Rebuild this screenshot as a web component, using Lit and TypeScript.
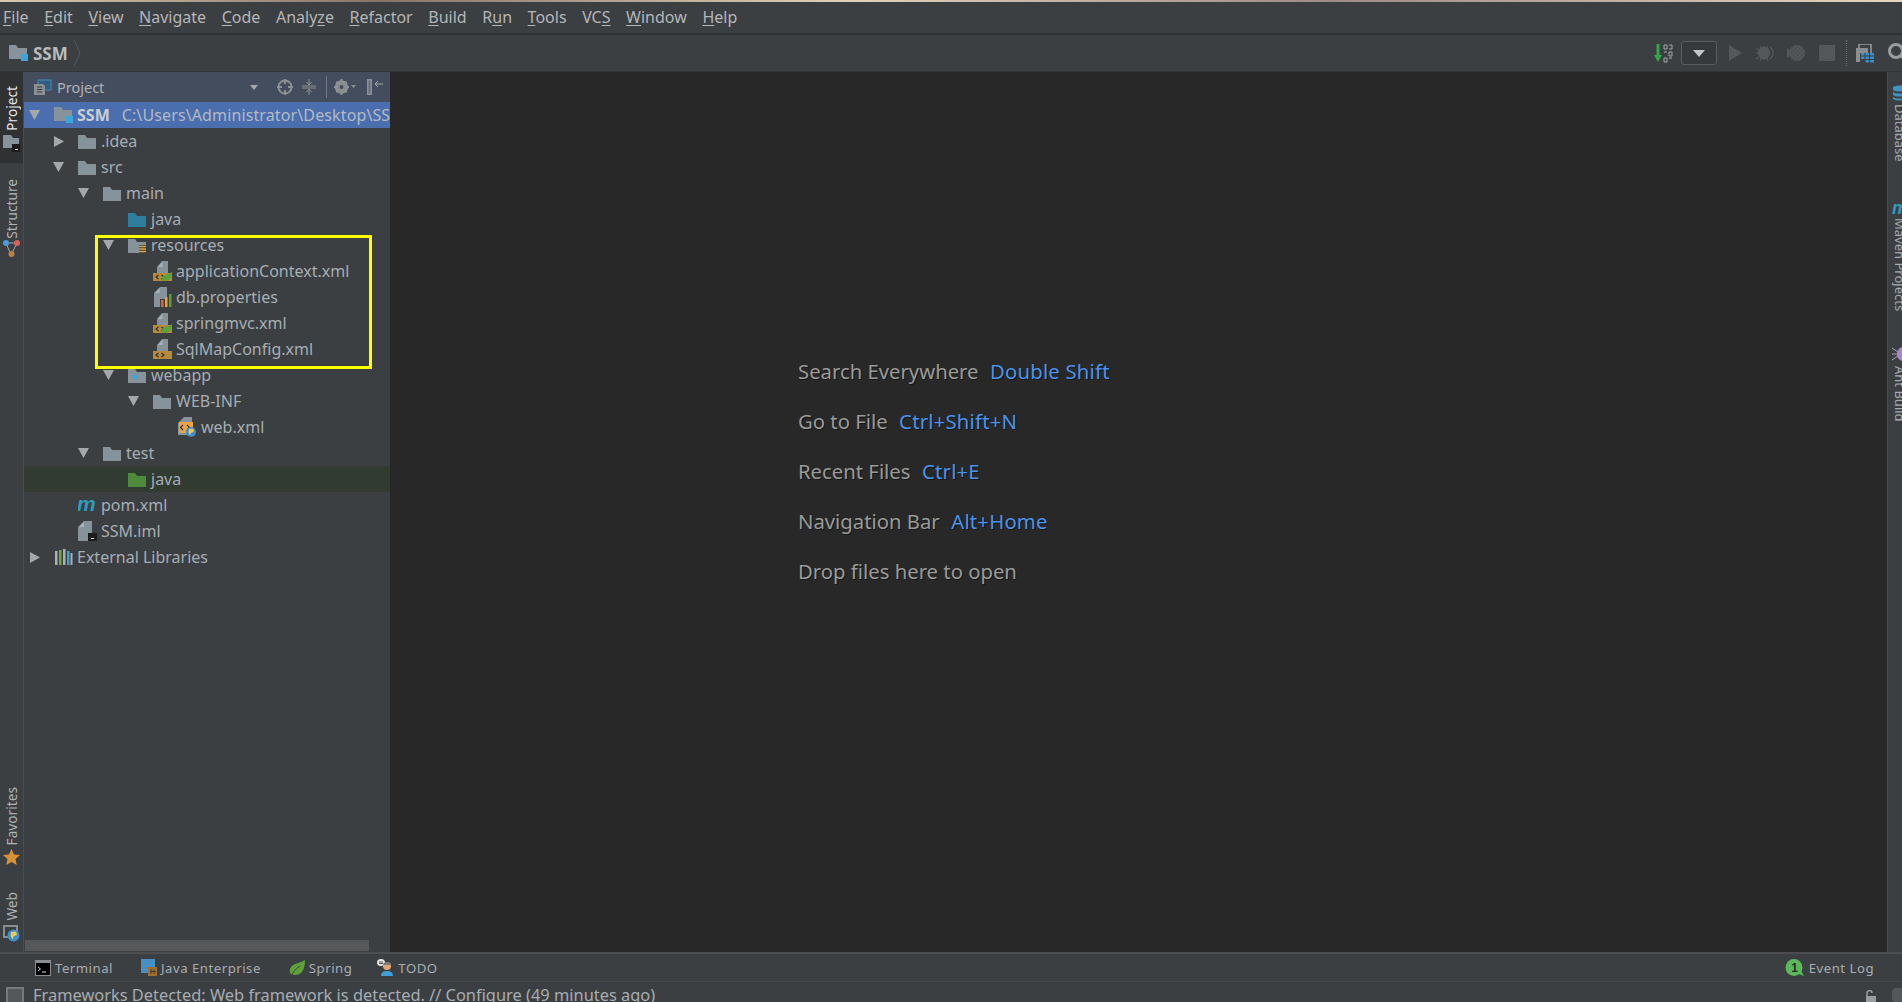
import { LitElement, html, svg, css } from "lit";
import { customElement } from "lit/decorators.js";

const folder = (fill = "#87939a", extra: unknown = "") => html`<svg class="ico" width="18" height="15" viewBox="0 0 18 15"><path d="M0 1h7l2 3h9v11H0z" fill=${fill}/>${extra}</svg>`;
const module_ = html`<svg class="ico" width="19" height="18" viewBox="0 0 19 18"><path d="M0 1h7l2 3h9v11H0z" fill="#87939a"/><rect x="12" y="10" width="7" height="7" fill="#3aa7dc"/></svg>`;
const resFolder = folder("#87939a", svg`<rect x="11" y="7" width="7" height="8" fill="#3c3f41"/><path d="M11 8.500h7M11 11h7M11 13.500h7" stroke="#d9a343" stroke-width="1.300"/>`);
const webFolder = folder("#87939a", svg`<circle cx="7" cy="9" r="2.500" fill="#3aa7dc"/>`);
const doc = svg`<path d="M4 12V6l5-6h6v12z" fill="#87939a"/><path d="M9.500 1v5H5z" fill="#a9b2b7"/>`;
const tagBand = svg`<rect x="0" y="12" width="19" height="8" fill="#b68a3e"/><path d="M5.500 14l-2.500 2 2.500 2M8.500 14l2.500 2-2.500 2" stroke="#2b2b2b" stroke-width="1.100" fill="none"/>`;
const xmlPlain = html`<svg class="ico" width="19" height="20" viewBox="0 0 19 20">${doc}${tagBand}</svg>`;
const xmlSpring = html`<svg class="ico" width="19" height="20" viewBox="0 0 19 20">${doc}${tagBand}<path d="M19 11c0 5-2 9-7 9-2.500 0-3.500-1.500-3-3.500C10 13.500 15 14 19 11z" fill="#5ea13a"/></svg>`;
const props = html`<svg class="ico" width="19" height="20" viewBox="0 0 19 20"><path d="M7 0h7v20H1V6z" fill="#87939a"/><path d="M6.500 1v5H2z" fill="#a9b2b7"/><rect x="7" y="12" width="12" height="8" fill="#3c3f41"/><rect x="8" y="13" width="2.500" height="7" fill="#e2662a"/><rect x="12" y="10" width="2.500" height="10" fill="#e9a33a"/><rect x="16" y="7" width="2.500" height="13" fill="#5f9e32"/></svg>`;
const webXml = html`<svg class="ico" width="19" height="20" viewBox="0 0 19 20"><path d="M6 0h8v18H0V6z" fill="#87939a"/><rect x="1" y="5" width="14" height="11" fill="#eca341"/><path d="M5 8l-2.500 2.500L5 13M9 8l2.500 2.500L9 13" stroke="#33291a" stroke-width="1.100" fill="none"/><circle cx="13" cy="15" r="5" fill="#3b8ed0"/><path d="M11 12l4-.500 1 3-3 1.500-1 2.500-1.500-3z" fill="#f1c84c"/></svg>`;
const pomM = html`<svg class="ico" width="19" height="14" viewBox="0 0 19 14"><text x="-1" y="13" font-family="Liberation Sans" font-size="21" font-weight="700" font-style="italic" fill="#2f9bbf">m</text></svg>`;
const iml = html`<svg class="ico" width="19" height="20" viewBox="0 0 19 20"><path d="M6 0h8v20H0V6z" fill="#87939a"/><path d="M6 1v5H1z" fill="#a9b2b7"/><rect x="10" y="12" width="9" height="8" fill="#1c1c1c"/><rect x="13" y="17" width="3" height="1" fill="#ddd"/></svg>`;
const libs = html`<svg class="ico" width="19" height="16" viewBox="0 0 19 16"><rect x="1" y="2" width="2.500" height="14" fill="#a8b0b5"/><rect x="5" y="1" width="2.500" height="15" fill="#6dab3c"/><rect x="9" y="0" width="2.500" height="16" fill="#a8b0b5"/><rect x="13" y="2" width="2.500" height="14" fill="#3f9fd6"/><rect x="16.500" y="4" width="2" height="12" fill="#a8b0b5"/></svg>`;

type Row = { d: number; a?: "o" | "c"; i: unknown; t: unknown; sel?: boolean; hl?: boolean };
const rows: Row[] = [
  { d: 0, a: "o", i: module_, t: html`<b>SSM</b><span class="path">C:\\Users\\Administrator\\Desktop\\SSM</span>`, sel: true },
  { d: 1, a: "c", i: folder(), t: ".idea" },
  { d: 1, a: "o", i: folder(), t: "src" },
  { d: 2, a: "o", i: folder(), t: "main" },
  { d: 3, i: folder("#2e7f9f"), t: "java" },
  { d: 3, a: "o", i: resFolder, t: "resources" },
  { d: 4, i: xmlSpring, t: "applicationContext.xml" },
  { d: 4, i: props, t: "db.properties" },
  { d: 4, i: xmlSpring, t: "springmvc.xml" },
  { d: 4, i: xmlPlain, t: "SqlMapConfig.xml" },
  { d: 3, a: "o", i: webFolder, t: "webapp" },
  { d: 4, a: "o", i: folder(), t: "WEB-INF" },
  { d: 5, i: webXml, t: "web.xml" },
  { d: 2, a: "o", i: folder(), t: "test" },
  { d: 3, i: folder("#4d8a3c"), t: "java", hl: true },
  { d: 1, i: pomM, t: "pom.xml" },
  { d: 1, i: iml, t: "SSM.iml" },
  { d: 0, a: "c", i: libs, t: "External Libraries" },
];

const menus: [string, string, string][] = [
  ["", "F", "ile"], ["", "E", "dit"], ["", "V", "iew"], ["", "N", "avigate"], ["", "C", "ode"],
  ["Analy", "z", "e"], ["", "R", "efactor"], ["", "B", "uild"], ["R", "u", "n"], ["", "T", "ools"],
  ["VC", "S", ""], ["", "W", "indow"], ["", "H", "elp"],
];
const hints: [string, string][] = [
  ["Search Everywhere", "Double Shift"], ["Go to File", "Ctrl+Shift+N"], ["Recent Files", "Ctrl+E"],
  ["Navigation Bar", "Alt+Home"], ["Drop files here to open", ""],
];

@customElement("app-root")
export class AppRoot extends LitElement {
  static styles = css`
    :host { display: flex; flex-direction: column; width: 100vw; height: 100vh; overflow: hidden; background: #3c3f41; color: #b4b8bb; font-family: "Noto Sans", sans-serif; font-size: 16px; }
    .ico { display: block; flex: none; }
    .photo { height: 2px; flex: none; background: linear-gradient(90deg, #d8c8b0, #8a7468 20%, #e2d2bc 45%, #a08a84 70%, #e6d6c0); }
    .menu { flex: none; box-sizing: border-box; padding: 0 0 2px 3px; display: flex; align-items: center; gap: 15.6px; border-bottom: 2px solid #2f3031; color: #b4b6b8; height: 33px; }
    .menu u { text-underline-offset: 2px; }
    .nav { height: 36px; flex: none; display: flex; align-items: center; padding-left: 9px; border-bottom: 1px solid #323436; background: #3c3f41; }
    .nav b { margin-left: 5px; color: #b8bcbf; font-size: 17px; }
    .crumb { margin-left: 5px; }
    .spacer { flex: 1; }
    .run { display: flex; align-items: center; margin-right: -7px; }
    .combo { width: 36px; height: 24px; box-sizing: border-box; border: 1px solid #5a5d5f; border-radius: 3px; margin: 0 12px 0 8px; display: flex; align-items: center; justify-content: center; background: #36393b; }
    .g13 { margin-right: 13px; }
    .g14 { margin-right: 14px; }
    .dots { width: 0; height: 26px; border-left: 1px dotted #6a6d6f; margin: 0 9px 0 11px; }
    .search { margin-left: 13px; }
    .main { flex: 1; min-height: 0; display: flex; }
    .left { width: 23px; flex: none; border-right: 1px solid #4a4c4e; display: flex; flex-direction: column; background: #3c3f41; }
    .tab { display: flex; flex-direction: column; align-items: center; width: 23px; color: #b0b3b5; font-size: 13.7px; }
    .tab span { writing-mode: vertical-rl; transform: rotate(180deg); line-height: 20px; }
    .tab.active { background: #2f3133; color: #e6e6e6; height: 91px; box-sizing: border-box; padding-top: 14px; gap: 4px; }
    .tab.structure { margin-top: 16px; gap: 1px; }
    .tab.fav { margin-top: auto; gap: 4px; }
    .tab.web { margin-top: 27px; margin-bottom: 10px; gap: 4px; }
    .panel { width: 366px; flex: none; display: flex; flex-direction: column; position: relative; background: #3c3f41; overflow: hidden; }
    .phead { height: 30px; flex: none; background: #444d5e; display: flex; align-items: center; padding-left: 10px; font-size: 14.5px; color: #aeb2b6; }
    .phead .label { margin-left: 5px; width: 193px; }
    .phead .acts { display: flex; align-items: center; }
    .phead .bar { width: 1px; height: 22px; background: #70767f; margin-left: 10px; }
    .cross { margin-left: 19px; }
    .coll { margin-left: 9px; }
    .gear { margin-left: 7px; }
    .pin { margin-left: 11px; }
    .tree { flex: 1; min-height: 0; }
    .row { height: 26px; display: flex; align-items: center; white-space: nowrap; color: #a5aeb5; font-size: 16px; }
    .row.sel { background: #4b6eaf; color: #c9ced4; }
    .row.sel b { color: #c9ced4; }
    .row.hl { background: #323b32; }
    .arrow { width: 29px; box-sizing: border-box; padding-right: 8px; flex: none; display: flex; justify-content: center; }
    .rowicon { width: 20px; height: 20px; box-sizing: border-box; padding-left: 1px; flex: none; display: flex; align-items: center; margin-right: 4px; }
    .path { margin-left: 12px; color: #b2bac3; letter-spacing: .12px; }
    .scroll { height: 11px; flex: none; width: 344px; margin: 0 0 1px 1px; background: #565759; }
    .mark { position: absolute; left: 71px; top: 163px; width: 271px; height: 128px; border: 3px solid #ffff00; pointer-events: none; }
    .editor { flex: 1; background: #282828; padding: 286px 0 0 408px; display: flex; flex-direction: column; gap: 23px; font-size: 20.3px; color: #9a9a98; text-shadow: 1px 1px 0 #161616; }
    .hint { line-height: 27px; display: flex; gap: 11.5px; white-space: nowrap; }
    .hint em { font-style: normal; color: #4a93ea; letter-spacing: .2px; }
    .right { width: 14px; flex: none; border-left: 1px solid #4a4c4e; overflow: hidden; position: relative; background: #3c3f41; }
    .rtab { display: flex; flex-direction: column; align-items: flex-start; width: 24px; margin-left: 4px; font-size: 13px; color: #a7abad; gap: 3px; }
    .rtab span { writing-mode: vertical-rl; line-height: 16px; }
    .rtab.db { margin-top: 13px; }
    .rtab.mv { margin-top: 40px; }
    .rtab.ant { margin-top: 34px; }
    .tools { height: 29px; flex: none; box-sizing: border-box; border-top: 2px solid #4b4d4f; display: flex; align-items: center; padding-left: 35px; font-size: 13.2px; letter-spacing: .5px; color: #a6adb3; }
    .tool { display: flex; align-items: center; gap: 4px; margin-right: 28px; white-space: nowrap; }
    .tool.sp { margin-right: 25px; }
    .event { margin: 0 28px 0 auto; }
    .status { height: 21px; flex: none; box-sizing: border-box; border-top: 1px solid #47494b; display: flex; padding-left: 6px; overflow: hidden; font-size: 16.4px; color: #a6adb3; white-space: nowrap; }
    .status .check { width: 18px; height: 17px; box-sizing: border-box; border: 2px solid #77797b; background: #55575a; margin: 5px 9px 0 0; flex: none; }
    .status .msg { line-height: 26px; }
    .status .lock { margin-left: auto; margin-top: 8px; margin-right: 16px; }
    .status .blob { width: 12px; height: 14px; border-radius: 4px; background: #55585a; margin: 6px -2px 0 0; flex: none; }
  `;

  arrow(a?: "o" | "c") {
    if (a === "o") return html`<svg width="11" height="10" viewBox="0 0 11 10"><path d="M0 0h11L5.500 10z" fill="#a4a8aa"/></svg>`;
    if (a === "c") return html`<svg width="10" height="11" viewBox="0 0 10 11"><path d="M0 0v11l10-5.500z" fill="#a4a8aa"/></svg>`;
    return "";
  }

  render() {
    return html`
      <div class="photo"></div>
      <div class="menu">${menus.map(([a, b, c]) => html`<span>${a}<u>${b}</u>${c}</span>`)}</div>
      <div class="nav">
        ${module_}
        <b>SSM</b>
        <svg class="crumb ico" width="8" height="26" viewBox="0 0 8 26"><path d="M1 0l6 13-6 13" fill="none" stroke="#55585a"/></svg>
        <div class="spacer"></div>
        <div class="run">
          <svg class="ico" width="19" height="19" viewBox="0 0 19 19"><path d="M2.500 0h3v11h2.500L4 18 0 11h2.500z" fill="#2fa84a"/><path d="M10 1h3v4h-3zM15 1h3v4h-3M10 8h3M15 8h3v4h-3zM10 14h3v4h-3zM15 14h3" fill="none" stroke="#a5a8aa" stroke-width="1"/></svg>
          <div class="combo"><svg width="12" height="7" viewBox="0 0 12 7"><path d="M0 0h12L6 7z" fill="#c4c6c8"/></svg></div>
          <svg class="ico g14" width="13" height="16" viewBox="0 0 13 16"><path d="M0 0l13 8-13 8z" fill="#55585a"/></svg>
          <svg class="ico g13" width="18" height="18" viewBox="0 0 18 18"><ellipse cx="8" cy="9" rx="6" ry="6.500" fill="#55585a"/><path d="M4 2l2 3M12 2l-2 3M0 9h3M0 15l3-2M0 4l3 2M12 17l-1-3M4 17l1-3M14 3c4 3 4 9 0 12" stroke="#55585a" stroke-width="1.200" fill="none"/></svg>
          <svg class="ico g14" width="18" height="18" viewBox="0 0 18 18"><defs><pattern id="hatch" width="3" height="3" patternUnits="userSpaceOnUse" patternTransform="rotate(45)"><rect width="3" height="3" fill="#55585a"/><path d="M0 0h3M0 0v3" stroke="#3c3f41" stroke-width=".6"/></pattern></defs><path d="M0 4l6 5-6 5z" fill="#55585a"/><circle cx="10" cy="9" r="8" fill="url(#hatch)"/></svg>
          <svg class="ico" width="16" height="16" viewBox="0 0 16 16"><rect width="16" height="16" fill="#55585a"/></svg>
          <div class="dots"></div>
          <svg class="ico" width="18" height="19" viewBox="0 0 18 19"><rect x="3" y="0" width="12" height="14" fill="none" stroke="#9a9d9f" stroke-width="1.500"/><rect x="0" y="4" width="12" height="14" fill="#8b8e90"/><path d="M4 9h14v9H4z" fill="#3c3f41"/><g fill="#3c8fc5"><rect x="5" y="9" width="3.500" height="2.500"/><rect x="9.500" y="9" width="3.500" height="2.500"/><rect x="14" y="9" width="4" height="2.500"/><rect x="5" y="12.500" width="3.500" height="2.500"/><rect x="9.500" y="12.500" width="3.500" height="2.500"/><rect x="14" y="12.500" width="4" height="2.500"/><rect x="9.500" y="16" width="3.500" height="2.500"/><rect x="14" y="16" width="4" height="2.500"/></g></svg>
          <svg class="ico search" width="22" height="22" viewBox="0 0 22 22"><circle cx="9" cy="9" r="6.500" fill="none" stroke="#9a9d9f" stroke-width="3"/><path d="M14 14l6 6" stroke="#9a9d9f" stroke-width="3"/></svg>
        </div>
      </div>
      <div class="main">
        <div class="left">
          <div class="tab active"><span>Project</span><svg class="ico" width="17" height="17" viewBox="0 0 17 17"><path d="M0 0h8l2 3h6v10H0z" fill="#87939a"/><rect x="9" y="9" width="8" height="8" fill="#1c1c1c"/><rect x="12" y="14" width="3" height="1" fill="#ddd"/></svg></div>
          <div class="tab structure"><span>Structure</span><svg class="ico" width="17" height="18" viewBox="0 0 17 18"><path d="M3 3l5 12M14 3L8 15M3 3h11" stroke="#a5a8aa" fill="none"/><circle cx="3" cy="3" r="3" fill="#4a9bd6"/><circle cx="14" cy="3" r="3" fill="#d96060"/><circle cx="8.500" cy="14" r="3" fill="#b58440"/></svg></div>
          <div class="tab fav"><span>Favorites</span><svg class="ico" width="17" height="16" viewBox="0 0 17 16"><path d="M8.500 0l2.500 5.500 6 .600-4.500 4 1.300 5.900-5.300-3-5.300 3 1.300-5.900L0 6.100l6-.600z" fill="#d99136"/></svg></div>
          <div class="tab web"><span>Web</span><svg class="ico" width="17" height="17" viewBox="0 0 17 17"><rect x="1" y="1" width="13" height="11" fill="none" stroke="#8a8d8f" stroke-width="2"/><circle cx="10.500" cy="10.500" r="6" fill="#3b8ed0"/><path d="M8 7l5-.5 1 3.500-3.500 1.500-1 3-2-3.500z" fill="#f1c84c"/></svg></div>
        </div>
        <div class="panel">
          <div class="phead">
            <svg class="ico" width="18" height="17" viewBox="0 0 18 17"><rect x="4" y="1" width="13" height="10" fill="#2f5e80" stroke="#4a8ab5"/><path d="M0 5h9l2 2v9H0z" fill="#8c8f91"/><path d="M3 8h5M3 10.500h5M3 13h5" stroke="#3c3f41"/></svg>
            <span class="label">Project</span>
            <div class="acts">
              <svg class="ico" width="8" height="5" viewBox="0 0 8 5"><path d="M0 0h8L4 5z" fill="#a4a8aa"/></svg>
              <svg class="ico cross" width="16" height="16" viewBox="0 0 16 16"><circle cx="8" cy="8" r="6.500" fill="none" stroke="#8d9093" stroke-width="2"/><path d="M8 0v5M8 11v5M0 8h5M11 8h5" stroke="#8d9093" stroke-width="2"/></svg>
              <svg class="ico coll" width="14" height="16" viewBox="0 0 14 16"><path d="M0 7h14M0 9h14" stroke="#8d9093"/><path d="M7 0v5M4.500 3L7 6l2.500-3M7 16v-5M4.500 13L7 10l2.500 3" stroke="#8d9093" fill="none"/></svg>
              <div class="bar"></div>
              <svg class="ico gear" width="22" height="16" viewBox="0 0 22 16"><circle cx="7.500" cy="8" r="5" fill="none" stroke="#8d9093" stroke-width="3.500"/><path d="M7.500 0v16M0 8h15M2.300 2.800l10.400 10.400M12.700 2.800L2.300 13.200" stroke="#8d9093" stroke-width="2"/><circle cx="7.500" cy="8" r="2" fill="#444d5e"/><path d="M17 6h5l-2.500 3z" fill="#8d9093"/></svg>
              <svg class="ico pin" width="16" height="16" viewBox="0 0 16 16"><rect x="0" y="0" width="5" height="16" fill="#8d9093"/><rect x="1.500" y="1.500" width="2" height="13" fill="#444d5e" opacity=".5"/><path d="M16 5H8M11 2L8 5l3 3" stroke="#a4a8aa" fill="none"/></svg>
            </div>
          </div>
          <div class="tree">
            ${rows.map((r) => html`<div class="row ${r.sel ? "sel" : ""} ${r.hl ? "hl" : ""}" style="padding-left:${r.d * 25 - 1}px">
              <div class="arrow">${this.arrow(r.a)}</div>
              <div class="rowicon">${r.i}</div>
              <div>${r.t}</div>
            </div>`)}
          </div>
          <div class="scroll"></div>
          <div class="mark"></div>
        </div>
        <div class="editor">
          ${hints.map(([a, b]) => html`<div class="hint"><span>${a}</span>${b ? html`<em>${b}</em>` : ""}</div>`)}
        </div>
        <div class="right">
          <div class="rtab db"><svg class="ico" width="17" height="16" viewBox="0 0 17 16"><path d="M1 2c3-2 11-2 15 0v3c-4 2-12 2-15 0zM1 7c3 2 11 2 15 0v3c-4 2-12 2-15 0zM1 12c3 2 11 2 15 0v2c-4 2-12 2-15 0z" fill="#3d94c4"/></svg><span>Database</span></div>
          <div class="rtab mv"><svg class="ico" width="18" height="13" viewBox="0 0 18 13"><text x="0" y="12" font-family="Liberation Sans" font-size="18" font-weight="700" font-style="italic" fill="#2f9bbf">m</text></svg><span>Maven Projects</span></div>
          <div class="rtab ant"><svg class="ico" width="18" height="18" viewBox="0 0 18 18"><ellipse cx="11" cy="9" rx="6" ry="7" fill="#b07fd0"/><path d="M0 3l6 4M0 9h6M0 15l6-4" stroke="#a5a8aa"/></svg><span>Ant Build</span></div>
        </div>
      </div>
      <div class="tools">
        <div class="tool"><svg class="ico" width="16" height="16" viewBox="0 0 16 16"><rect width="16" height="16" fill="#8b8e90"/><rect x="1" y="3" width="14" height="12" fill="#000"/><path d="M3 7l2.500 2L3 11M7 12h4" stroke="#ddd" fill="none"/></svg><span>Terminal</span></div>
        <div class="tool"><svg class="ico" width="16" height="17" viewBox="0 0 16 17"><rect width="14" height="14" fill="#4a8fc4"/><rect x="7" y="8" width="9" height="9" fill="#a0702c"/><path d="M10 10v5M13 10v5M9 12.500h6" stroke="#3c3f41"/></svg><span>Java Enterprise</span></div>
        <div class="tool sp"><svg class="ico" width="16" height="16" viewBox="0 0 16 16"><path d="M16 0c0 9-3 15-10 15-4 0-6-2-5-6C3 3 10 4 16 0z" fill="#5ea13a"/><path d="M3 15C5 10 8 8 11 6" stroke="#3c3f41" fill="none"/></svg><span>Spring</span></div>
        <div class="tool"><svg class="ico" width="17" height="17" viewBox="0 0 17 17"><ellipse cx="4" cy="3.500" rx="4" ry="3.500" fill="#e6e6e6"/><path d="M2 3h4M2 4.500h4" stroke="#555"/><circle cx="10" cy="7" r="4" fill="#e3a878"/><path d="M6 6c0-4 8-4 8 0z" fill="#777"/><path d="M4 17c0-4 3-5 6-5s6 1 6 5z" fill="#3f9fd6"/></svg><span>TODO</span></div>
        <div class="tool event"><svg class="ico" width="20" height="18" viewBox="0 0 20 18"><circle cx="9" cy="8.500" r="8.500" fill="#5cb85c"/><path d="M11 14l8 3-4-7z" fill="#5cb85c"/><text x="6.300" y="13" font-family="Liberation Sans" font-size="12" font-weight="700" fill="#23301f">1</text></svg><span>Event Log</span></div>
      </div>
      <div class="status">
        <div class="check"></div>
        <span class="msg">Frameworks Detected: Web framework is detected. // Configure (49 minutes ago)</span>
        <svg class="ico lock" width="11" height="14" viewBox="0 0 11 14"><rect x="1" y="6" width="10" height="8" fill="#9a9d9f"/><path d="M2 6V3a2.500 2.500 0 0 1 5 0" fill="none" stroke="#9a9d9f" stroke-width="1.500"/></svg>
        <div class="blob"></div>
      </div>
    `;
  }
}
